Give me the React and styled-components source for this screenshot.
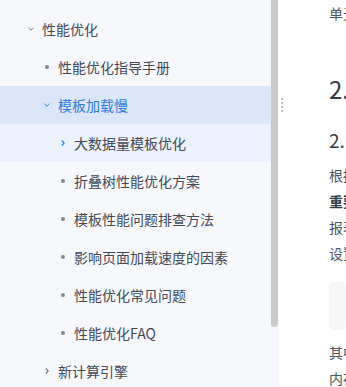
import styled, { createGlobalStyle } from 'styled-components';

const GlobalStyle = createGlobalStyle`
  html, body {
    margin: 0;
    padding: 0;
    background: #fff;
    font-family: "Noto Sans CJK SC", "Noto Sans", sans-serif;
  }
`;

const Page = styled.div`
  display: flex;
  width: 346px;
  height: 387px;
  overflow: hidden;
`;

const Sidebar = styled.div`
  display: flex;
  flex: 0 0 279px;
  background: #f7f8fc;
`;

const Tree = styled.ul`
  list-style: none;
  margin: 0;
  padding: 10px 0 0 0;
  width: 271px;
`;

const Row = styled.li`
  display: flex;
  align-items: center;
  height: 38px;
  padding-left: ${(p) => 26 + (p.level - 1) * 16}px;
  background: ${(p) => (p.active ? '#dae7fb' : p.current ? '#ebf1fd' : 'transparent')};
  color: ${(p) => (p.active ? '#2b7be0' : '#434a56')};
  font-size: 14px;
  white-space: nowrap;
`;

const IconBox = styled.span`
  display: flex;
  align-items: center;
  justify-content: center;
  width: 10px;
  height: 14px;
  margin-right: 6px;
`;

const Bullet = styled.span`
  width: 4px;
  height: 4px;
  border-radius: 50%;
  background: #858c98;
`;

const ScrollRail = styled.div`
  width: 8px;
`;

const Thumb = styled.div`
  width: 7px;
  height: 327px;
  background: #c9c9c9;
  border-radius: 0 0 4px 4px;
`;

const Content = styled.div`
  position: relative;
  flex: 1;
  background: #fff;
  padding-left: 50px;
  color: #4b5260;
  white-space: nowrap;
  overflow: hidden;
`;

const Handle = styled.div`
  position: absolute;
  left: 2px;
  top: 98px;
  display: flex;
  flex-direction: column;
  gap: 2px;
  span {
    width: 2px;
    height: 2px;
    background: #b3bfce;
  }
`;

const Para = styled.p`
  margin: 0;
  font-size: 14px;
  line-height: 26px;
  font-weight: ${(p) => (p.bold ? 700 : 400)};
  color: ${(p) => (p.bold ? '#333a46' : '#4b5260')};
`;

const H2 = styled.h2`
  margin: 0;
  font-size: 24px;
  line-height: 32px;
  font-weight: 400;
  color: #323a48;
`;

const H3 = styled.h3`
  margin: 0;
  font-size: 19px;
  line-height: 28px;
  font-weight: 400;
  color: #323a48;
`;

const Spacer = styled.div`
  height: ${(p) => p.h}px;
`;

const CodeBox = styled.div`
  height: 48px;
  margin: 16px 0 9px;
  border-radius: 5px;
  background: #f7f7f8;
`;

const Chevron = ({ dir, color }) => (
  <svg width="8" height="8" viewBox="0 0 8 8" fill="none">
    {dir === 'down' ? (
      <path d="M1.5 2.8 L4 5.2 L6.5 2.8" stroke={color} strokeWidth="1" />
    ) : (
      <path d="M2.8 1.5 L5.2 4 L2.8 6.5" stroke={color} strokeWidth="1.1" />
    )}
  </svg>
);

const items = [
  { level: 1, label: '性能优化', icon: 'down' },
  { level: 2, label: '性能优化指导手册', icon: 'dot' },
  { level: 2, label: '模板加载慢', icon: 'down', active: true },
  { level: 3, label: '大数据量模板优化', icon: 'right', current: true },
  { level: 3, label: '折叠树性能优化方案', icon: 'dot' },
  { level: 3, label: '模板性能问题排查方法', icon: 'dot' },
  { level: 3, label: '影响页面加载速度的因素', icon: 'dot' },
  { level: 3, label: '性能优化常见问题', icon: 'dot' },
  { level: 3, label: '性能优化FAQ', icon: 'dot' },
  { level: 2, label: '新计算引擎', icon: 'right' },
];

export default function App() {
  return (
    <>
      <GlobalStyle />
      <Page>
        <Sidebar>
          <Tree>
            {items.map((it) => (
              <Row key={it.label} level={it.level} active={it.active} current={it.current}>
                <IconBox>
                  {it.icon === 'dot' ? (
                    <Bullet />
                  ) : (
                    <Chevron
                      dir={it.icon}
                      color={it.active || it.current ? '#2b7be0' : '#6b7280'}
                    />
                  )}
                </IconBox>
                {it.label}
              </Row>
            ))}
          </Tree>
          <ScrollRail>
            <Thumb />
          </ScrollRail>
        </Sidebar>
        <Content>
          <Handle>
            <span />
            <span />
            <span />
            <span />
          </Handle>
          <Para>单元格数据量较大时模板加载较慢</Para>
          <Spacer h={47} />
          <H2>2. 模板加载慢</H2>
          <Spacer h={21} />
          <H3>2.1 大数据量模板优化</H3>
          <Spacer h={8} />
          <Para>根据数据量大小选择合适的方式</Para>
          <Para bold>重要说明：</Para>
          <Para>报表数据量较大时建议开启分页</Para>
          <Para>设置行式引擎并配置参数</Para>
          <CodeBox />
          <Para>其中每页行数可以自行设置</Para>
          <Para>内存占用也会相应降低</Para>
        </Content>
      </Page>
    </>
  );
}
